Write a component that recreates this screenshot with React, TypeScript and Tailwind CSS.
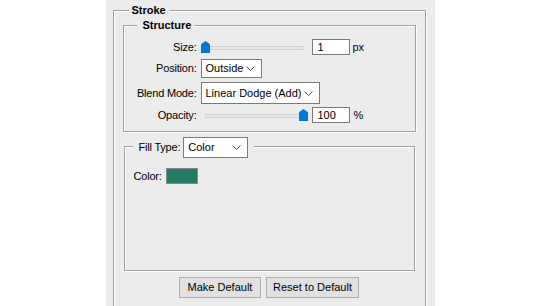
import React from "react";

const font = { fontFamily: '"Liberation Sans", Arial, sans-serif' };

// small down chevron used in the dropdowns
const Chevron = () => (
  <svg width="9" height="5" viewBox="0 0 9 5" className="shrink-0">
    <path d="M0.5 0.5 L4.5 4.5 L8.5 0.5" fill="none" stroke="#4d4d4d" strokeWidth="1" />
  </svg>
);

const Select = ({ value, className }: { value: string; className: string }) => (
  <div
    className={`flex items-center justify-between bg-white border border-[#7a7a7a] pl-[4px] pr-[6px] text-[11px] text-black ${className}`}
  >
    <span className="whitespace-nowrap">{value}</span>
    <Chevron />
  </div>
);

const Thumb = () => (
  <svg width="9" height="12" viewBox="0 0 9 12">
    <path d="M0 4 Q0 3 1 2.5 L4.5 0 L8 2.5 Q9 3 9 4 V12 H0 Z" fill="#0078d7" />
  </svg>
);

const Slider = ({ atEnd }: { atEnd?: boolean }) => (
  <div className="relative w-[107px] h-[16px]">
    <div className="mx-[4px] mt-[7px] h-[4px] bg-[#e7e7e7] border border-[#d4d4d4]" />
    <div className={`absolute top-[2px] ${atEnd ? "right-0" : "left-0"}`}>
      <Thumb />
    </div>
  </div>
);

const NumberBox = ({ value }: { value: string }) => (
  <div className="w-[38px] h-[16px] bg-white border border-[#7a7a7a] pl-[5px] text-[11px] leading-[14px] text-black">
    {value}
  </div>
);

const Label = ({ children }: { children: React.ReactNode }) => (
  <div className="w-[73px] shrink-0 text-right text-[11px] tracking-[-0.2px] text-black whitespace-nowrap">{children}</div>
);

const etched = "border border-[#a0a0a0] shadow-[1px_1px_0_#ffffff,inset_1px_1px_0_#ffffff]";

export default function App() {
  return (
    <div className="w-[540px] h-[306px] bg-white overflow-hidden" style={font}>
      <div className="w-[329px] h-[306px] mx-auto bg-[#ececec] overflow-hidden pt-[10px]">
        {/* Stroke group */}
        <div className={`relative ml-[7px] w-[313px] h-[320px] px-[9px] pt-[14px] ${etched}`}>
          <div className="absolute -top-[8px] left-[15px] px-[3px] bg-[#ececec] text-[11px] leading-[14px] font-bold text-black">
            Stroke
          </div>

          {/* Structure group */}
          <div className={`relative w-[293px] pt-[13px] pb-[8px] ${etched}`}>
            <div className="absolute -top-[8px] left-[13px] pl-[6px] pr-[3px] bg-[#ececec] text-[11px] leading-[14px] font-bold text-black">
              Structure
            </div>

            <div className="flex items-center gap-[4px] h-[16px]">
              <Label>Size:</Label>
              <Slider />
              <div className="flex items-center gap-[3px]">
                <NumberBox value="1" />
                <span className="text-[11px] text-black">px</span>
              </div>
            </div>

            <div className="flex items-center gap-[4px] mt-[4px]">
              <Label>Position:</Label>
              <Select value="Outside" className="w-[61px] h-[19px]" />
            </div>

            <div className="flex items-center gap-[4px] mt-[4px]">
              <Label>Blend Mode:</Label>
              <Select value="Linear Dodge (Add)" className="w-[119px] h-[22px]" />
            </div>

            <div className="flex items-center gap-[4px] h-[16px] mt-[3px]">
              <Label>Opacity:</Label>
              <Slider atEnd />
              <div className="flex items-center gap-[4px]">
                <NumberBox value="100" />
                <span className="text-[11px] text-black">%</span>
              </div>
            </div>
          </div>

          {/* Fill group */}
          <div className={`relative ml-[1px] mt-[14px] w-[291px] h-[125px] pl-[9px] pt-[21px] ${etched}`}>
            <div className="absolute -top-[10px] left-[8px] pl-[6px] pr-[6px] bg-[#ececec] flex items-center gap-[3px]">
              <span className="text-[11px] tracking-[-0.2px] text-black whitespace-nowrap">Fill Type:</span>
              <Select value="Color" className="w-[65px] h-[21px]" />
            </div>
            <div className="flex items-center gap-[4px]">
              <span className="w-[28px] text-[11px] tracking-[-0.2px] text-black whitespace-nowrap">Color:</span>
              <div className="w-[32px] h-[16px] border border-[#8a8a8a] bg-[#247a64]" />
            </div>
          </div>

          {/* Buttons */}
          <div className="flex justify-center gap-[5px] mt-[6px]">
            <button className="w-[82px] h-[21px] bg-[#e1e1e1] border border-[#adadad] text-[11px] text-black">
              Make Default
            </button>
            <button className="w-[93px] h-[21px] bg-[#e1e1e1] border border-[#adadad] text-[11px] text-black">
              Reset to Default
            </button>
          </div>
        </div>
      </div>
    </div>
  );
}
